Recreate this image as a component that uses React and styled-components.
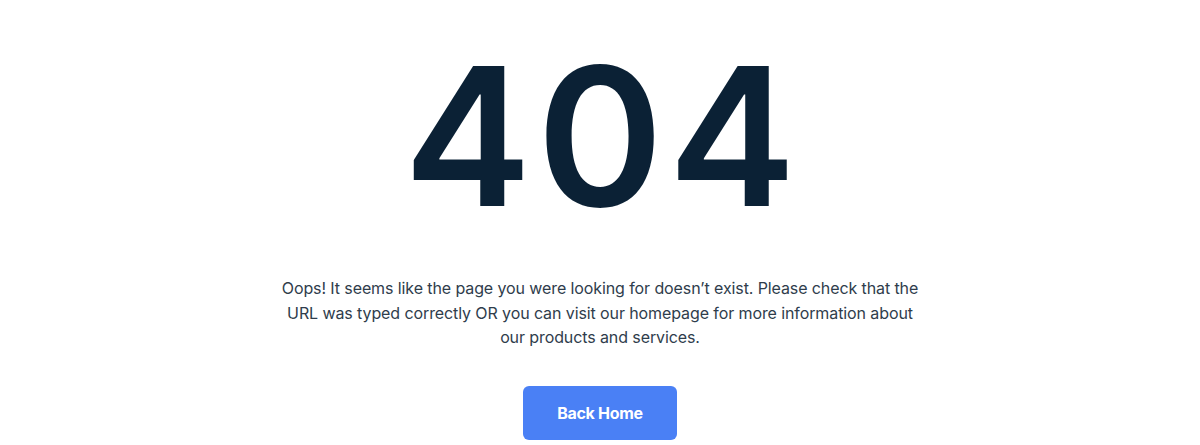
import React from 'react';
import styled, { createGlobalStyle } from 'styled-components';

const GlobalStyle = createGlobalStyle`
  body {
    margin: 0;
    background: #ffffff;
    font-family: Inter, "Noto Sans", sans-serif;
  }
`;

const Page = styled.main`
  display: flex;
  flex-direction: column;
  align-items: center;
  padding-top: 36px;
`;

const Code = styled.h1`
  margin: 0;
  font-size: 192px;
  line-height: 200px;
  font-weight: 600;
  color: #0b2135;
  letter-spacing: 5px;
  text-indent: 5px;
`;

const Message = styled.p`
  margin: 40px 0 0;
  max-width: 645px;
  text-align: center;
  font-size: 16px;
  line-height: 24.5px;
  letter-spacing: -0.1px;
  color: #2f3d4c;
`;

const HomeButton = styled.a`
  display: flex;
  align-items: center;
  justify-content: center;
  margin-top: 36px;
  width: 154px;
  height: 54px;
  border-radius: 6px;
  background: #4a80f5;
  color: #ffffff;
  font-weight: 700;
  font-size: 16px;
  text-decoration: none;
  letter-spacing: -0.3px;
`;

const App = () => (
  <>
    <GlobalStyle />
    <Page>
      <Code>404</Code>
      <Message>
        Oops! It seems like the page you were looking for doesn’t exist. Please check that the URL
        was typed correctly OR you can visit our homepage for more information about our products
        and services.
      </Message>
      <HomeButton href="#">Back Home</HomeButton>
    </Page>
  </>
);

export default App;
